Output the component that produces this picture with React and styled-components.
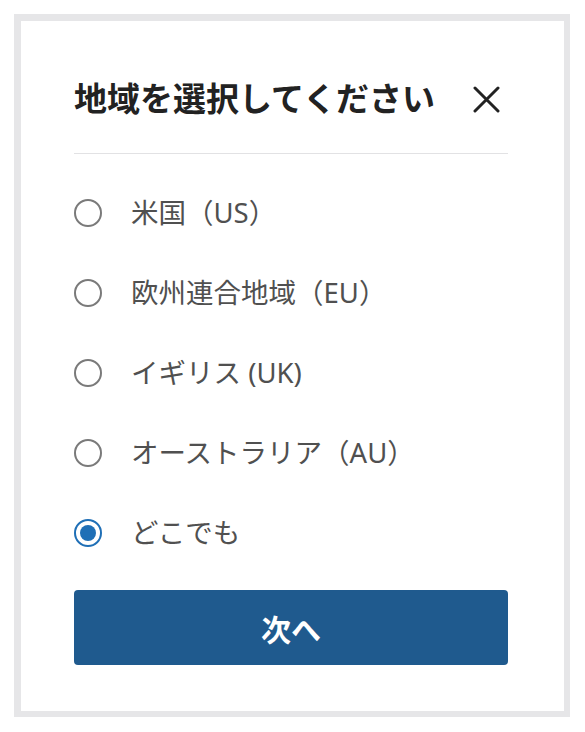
import React, { useState } from "react";
import styled, { createGlobalStyle } from "styled-components";

const GlobalStyle = createGlobalStyle`
  body {
    margin: 0;
    background: #ffffff;
    font-family: "Noto Sans", "Noto Sans CJK JP", sans-serif;
  }
`;

const regions = [
  { id: "us", label: "米国（US）" },
  { id: "eu", label: "欧州連合地域（EU）" },
  { id: "uk", label: "イギリス (UK)" },
  { id: "au", label: "オーストラリア（AU）" },
  { id: "any", label: "どこでも" },
];

const App = () => {
  const [selected, setSelected] = useState("any");

  return (
    <>
      <GlobalStyle />
      <Frame>
        <Header>
          <Title>地域を選択してください</Title>
          <CloseButton aria-label="閉じる">
            <svg width="27" height="27" viewBox="0 0 27 27">
              <path
                d="M2 2 L25 25 M25 2 L2 25"
                stroke="#222"
                strokeWidth="3"
                strokeLinecap="round"
              />
            </svg>
          </CloseButton>
        </Header>
        <Divider />
        <OptionList>
          {regions.map((r) => (
            <Option key={r.id} onClick={() => setSelected(r.id)}>
              <Radio $checked={selected === r.id} />
              <Label>{r.label}</Label>
            </Option>
          ))}
        </OptionList>
        <NextButton>次へ</NextButton>
      </Frame>
    </>
  );
};

const Frame = styled.div`
  box-sizing: border-box;
  margin: 14px;
  width: 556px;
  height: 703px;
  border: 7px solid #e6e6e8;
  border-right-width: 6px;
  border-bottom-width: 6px;
  padding: 0 56px 0 53px;
  display: flex;
  flex-direction: column;
`;

const Header = styled.div`
  display: flex;
  align-items: center;
  justify-content: space-between;
  padding-top: 56px;
  padding-bottom: 32px;
`;

const Title = styled.h2`
  margin: 0;
  font-size: 33px;
  font-weight: 700;
  line-height: 44px;
  color: #222222;
`;

const CloseButton = styled.button`
  width: 44px;
  height: 44px;
  border: none;
  background: none;
  padding: 0;
  display: flex;
  align-items: center;
  justify-content: center;
  cursor: pointer;
`;

const Divider = styled.hr`
  margin: 0;
  border: none;
  border-top: 1.5px solid #e2e2e4;
`;

const OptionList = styled.div`
  display: flex;
  flex-direction: column;
  padding-top: 19px;
  padding-bottom: 17px;
`;

const Option = styled.label`
  display: flex;
  align-items: center;
  gap: 29px;
  height: 80px;
  cursor: pointer;
`;

const Radio = styled.span`
  box-sizing: border-box;
  flex: none;
  width: 28px;
  height: 28px;
  border-radius: 50%;
  border: 2.5px solid ${(p) => (p.$checked ? "#1f6fb6" : "#7a7a7a")};
  display: flex;
  align-items: center;
  justify-content: center;

  &::after {
    content: "";
    width: 16px;
    height: 16px;
    border-radius: 50%;
    background: #1f6fb6;
    display: ${(p) => (p.$checked ? "block" : "none")};
  }
`;

const Label = styled.span`
  font-size: 27.5px;
  color: #505050;
  line-height: 1.3;
`;

const NextButton = styled.button`
  height: 75px;
  width: 100%;
  border: none;
  border-radius: 4px;
  background: #1f5a8e;
  color: #ffffff;
  font-family: "Noto Sans", "Noto Sans CJK JP", sans-serif;
  font-size: 30px;
  font-weight: 700;
  cursor: pointer;
`;

export default App;
